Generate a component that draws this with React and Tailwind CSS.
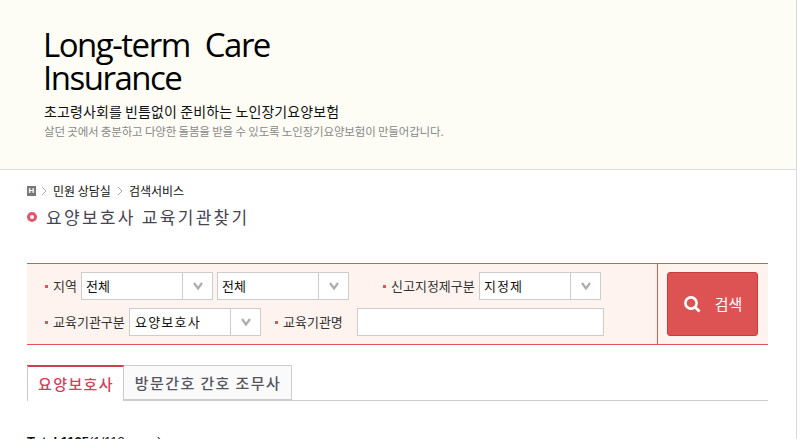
const KR = { fontFamily: '"Noto Sans CJK KR", "Liberation Sans", sans-serif' };

function Chevron() {
  return (
    <svg width="10" height="8" viewBox="0 0 10 8" aria-hidden="true">
      <path d="M1 1 L5 6.5 L9 1" fill="none" stroke="#a9adb3" strokeWidth="2.2" />
    </svg>
  );
}

function Select({ value, width, arrow = 30, tracking = "" }) {
  return (
    <div className={`flex h-7 shrink-0 border border-[#cccccc] bg-white ${width}`}>
      <div className={`flex flex-1 items-center pl-1 text-[13px] text-[#111111] ${tracking}`}>{value}</div>
      <div className="flex items-center justify-center border-l border-[#cccccc]" style={{ width: arrow }}>
        <Chevron />
      </div>
    </div>
  );
}

function Label({ children, className = "" }) {
  return (
    <span className={`flex items-center text-[13px] text-[#333333] ${className}`}>
      <span className="mr-[5px] h-[3px] w-[3px] bg-[#dd5555]" />
      {children}
    </span>
  );
}

export default function App() {
  return (
    <div className="h-[439px] w-[802px] overflow-hidden bg-white" style={KR}>
      <div className="mr-[5px] h-full border-r border-[#d9d9d9]">
        <header className="h-[170px] border-b border-[#dddddd] bg-[#fdfdf6] pl-[43px] pt-[28px]">
          <h1 className="text-[33px] font-medium leading-[33px] tracking-[-1.5px] text-black [word-spacing:8px]" style={{ fontFamily: '"Open Sans", sans-serif' }}>
            Long-term Care<br />Insurance
          </h1>
          <p className="ml-[1px] mt-[7px] text-[14px] leading-[20px] tracking-[0.1px] text-[#111111]">초고령사회를 빈틈없이 준비하는 노인장기요양보험</p>
          <p className="ml-[1px] mt-[1px] text-[11.5px] leading-[18px] tracking-[-0.17px] text-[#888888]">살던 곳에서 충분하고 다양한 돌봄을 받을 수 있도록 노인장기요양보험이 만들어갑니다.</p>
        </header>

        <main className="pl-[27px] pr-[28px]">
          <nav className="mt-[14px] flex h-[14px] items-center text-[12px] text-[#111111]">
            <span className="flex h-[10px] w-[9px] items-center justify-center bg-[#777777] text-[8px] font-bold leading-none text-white" style={{ fontFamily: '"Liberation Sans", sans-serif' }}>H</span>
            <svg className="ml-[5px] mr-[6px]" width="6" height="10" viewBox="0 0 6 10"><path d="M1 1 L5 5 L1 9" fill="none" stroke="#aaaaaa" /></svg>
            <span>민원 상담실</span>
            <svg className="mx-[6px]" width="6" height="10" viewBox="0 0 6 10"><path d="M1 1 L5 5 L1 9" fill="none" stroke="#aaaaaa" /></svg>
            <span>검색서비스</span>
          </nav>

          <div className="mt-[5px] flex h-[28px] items-center">
            <span className="h-[10px] w-[10px] rounded-full border-[3px] border-[#e2566b] bg-white" />
            <h2 className="ml-[9px] text-[17px] tracking-[2.3px] text-[#444455]">요양보호사 교육기관찾기</h2>
          </div>

          <section className="mt-[32px] flex h-[82px] border-y border-[#dd5555] bg-[#fff3ef]">
            <div className="flex w-[631px] flex-col gap-2 border-r border-[#dd5555] pl-[18px] pt-2">
              <div className="flex items-center">
                <Label className="w-[36px]">지역</Label>
                <Select value="전체" width="w-[132px]" />
                <Select value="전체" width="w-[132px] ml-[4px]" />
                <Label className="ml-[34px] w-[96px]">신고지정제구분</Label>
                <Select value="지정제" width="w-[122px]" tracking="tracking-[1px]" />
              </div>
              <div className="flex items-center">
                <Label className="w-[84px]">교육기관구분</Label>
                <Select value="요양보호사" width="w-[132px]" tracking="tracking-[1.2px] pl-[5px]" />
                <Label className="ml-[14px] w-[82px]">교육기관명</Label>
                <div className="h-7 w-[247px] border border-[#cccccc] bg-white" />
              </div>
            </div>
            <div className="flex flex-1 items-center pl-[9px]">
              <button className="flex h-16 w-[91px] items-center justify-center gap-[14px] rounded-[3px] border border-[#c93c3c] bg-[#dd5353] text-[15px] text-white">
                <svg width="18" height="18" viewBox="0 0 18 18" aria-hidden="true">
                  <circle cx="8" cy="8" r="5.6" fill="none" stroke="white" strokeWidth="2.6" />
                  <path d="M12.2 12.2 L16.5 16.5" stroke="white" strokeWidth="2.8" />
                </svg>
                검색
              </button>
            </div>
          </section>

          <div className="mt-5 flex h-9 border-b border-[#cccccc]">
            <div className="h-9 w-[97px] border-x border-[#cccccc] border-t-2 border-t-[#cf3f52] bg-white pl-[1px] pt-[6px] text-center text-[15px] font-medium tracking-[1.4px] text-[#d3405a]">요양보호사</div>
            <div className="h-[35px] w-[168px] border-y border-r border-[#cccccc] bg-[#fafafa] pl-[1px] pt-[6px] text-center text-[15px] font-medium tracking-[1.4px] text-[#555560]">방문간호 간호 조무사</div>
          </div>

          <p className="mt-[32px] text-[13px] leading-[18px] text-[#111111]" style={{ fontFamily: '"Liberation Sans", sans-serif' }}>
            <b>Total 1125</b>(1/113 page)
          </p>
        </main>
      </div>
    </div>
  );
}
